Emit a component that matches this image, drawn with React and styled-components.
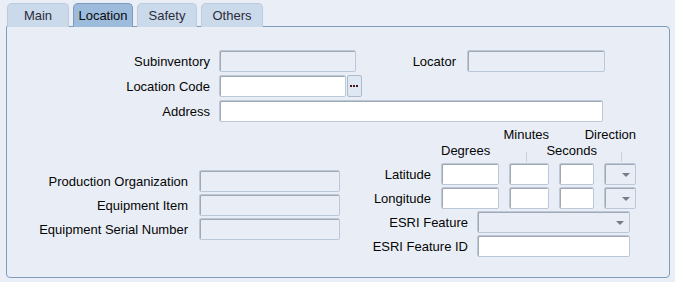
import React from "react";
import styled, { createGlobalStyle } from "styled-components";

const GlobalStyle = createGlobalStyle`
  html, body {
    margin: 0;
    padding: 0;
    background: #eaeff7;
  }
  body {
    font-family: "Liberation Sans", Arial, sans-serif;
    font-size: 13px;
    color: #050505;
  }
`;

const Page = styled.div`
  width: 675px;
  height: 282px;
  padding: 3px 0 0 6px;
  box-sizing: border-box;
`;

const TabBar = styled.div`
  display: flex;
  gap: 4px;
  padding-left: 1px;
  height: 23px;
  position: relative;
  z-index: 1;
`;

const Tab = styled.div`
  width: ${(p) => p.$w}px;
  height: 24px;
  box-sizing: border-box;
  display: flex;
  align-items: center;
  justify-content: center;
  border: 1px solid ${(p) => (p.$active ? "#7f9cbc" : "#bccbdc")};
  border-bottom: none;
  border-radius: 5px 5px 0 0;
  background: ${(p) => (p.$active ? "#9dbcdc" : "#cbdaea")};
  color: ${(p) => (p.$active ? "#0a0a0a" : "#2b2b3a")};
  padding-bottom: 1px;
`;

const Panel = styled.div`
  width: 664px;
  height: 252px;
  box-sizing: border-box;
  border: 1px solid #7f9cbc;
  border-radius: 0 4px 4px 4px;
  background: #e9eef6;
  padding-top: 23px;
`;

const TopRows = styled.div`
  display: flex;
  flex-direction: column;
  gap: 3px;
`;

const Row = styled.div`
  display: flex;
  align-items: center;
  height: 22px;
`;

const Label = styled.div`
  width: ${(p) => p.$w}px;
  margin-right: ${(p) => p.$gap ?? 9}px;
  text-align: right;
  white-space: nowrap;
  flex: none;
`;

const Field = styled.div`
  width: ${(p) => p.$w}px;
  height: 22px;
  box-sizing: border-box;
  border: 1px solid #bac8d9;
  border-radius: 2px;
  box-shadow: inset 1px 1px 0 #a3a9b1;
  background: ${(p) => (p.$disabled ? "#e9eef6" : "#ffffff")};
  flex: none;
  position: relative;
`;

const Caret = styled.span`
  position: absolute;
  right: 5px;
  top: 9px;
  width: 0;
  height: 0;
  border-left: 4px solid transparent;
  border-right: 4px solid transparent;
  border-top: 4px solid #737c87;
`;

const LovButton = styled.div`
  width: 15px;
  height: 22px;
  box-sizing: border-box;
  margin-left: 1px;
  border: 1px solid #adbccd;
  border-radius: 2px;
  background: #dfe8f2;
  display: flex;
  align-items: center;
  justify-content: center;
`;

const Bottom = styled.div`
  display: flex;
  margin-top: 5px;
`;

const LeftCol = styled.div`
  display: flex;
  flex-direction: column;
  gap: 2px;
  padding-top: 43px;
`;

const RightCol = styled.div`
  display: flex;
  flex-direction: column;
  margin-left: 20px;
`;

const CoordGrid = styled.div`
  display: grid;
  grid-template-columns: 71px 58px 40px 35px 32px;
  column-gap: 10px;
  row-gap: 2px;
  align-items: center;
`;

const HeaderGrid = styled.div`
  display: grid;
  grid-template-columns: 71px 58px 40px 35px 32px;
  grid-template-rows: 16px 20px;
  column-gap: 10px;
`;

const Head = styled.div`
  grid-column: ${(p) => p.$col};
  grid-row: ${(p) => p.$row};
  display: flex;
  justify-content: ${(p) => (p.$end ? "flex-end" : "flex-start")};
  margin-right: ${(p) => p.$mr ?? 0}px;
  white-space: nowrap;
  line-height: 15px;
`;

const Divider = styled.div`
  grid-column: ${(p) => p.$col};
  grid-row: 2;
  margin: 9px 0 0 17px;
  width: 1px;
  height: 10px;
  background: #c9d2dc;
`;

const CoordLabel = styled.div`
  text-align: right;
  white-space: nowrap;
`;

const EsriRows = styled.div`
  display: flex;
  flex-direction: column;
  gap: 2px;
  margin-top: 2px;
`;

const Dots = () => (
  <svg width="9" height="3" viewBox="0 0 9 3">
    <rect x="0" y="0" width="2" height="2" fill="#4a1515" />
    <rect x="3" y="0" width="2" height="2" fill="#4a1515" />
    <rect x="6" y="0" width="2" height="2" fill="#4a1515" />
  </svg>
);

const tabs = [
  { name: "Main", w: 62 },
  { name: "Location", w: 60, active: true },
  { name: "Safety", w: 60 },
  { name: "Others", w: 62 },
];

const coords = ["Latitude", "Longitude"];

export default function App() {
  return (
    <Page>
      <GlobalStyle />
      <TabBar>
        {tabs.map((t) => (
          <Tab key={t.name} $w={t.w} $active={t.active}>
            {t.name}
          </Tab>
        ))}
      </TabBar>
      <Panel>
        <TopRows>
          <Row>
            <Label $w={203}>Subinventory</Label>
            <Field $w={137} $disabled />
            <Label $w={100} $gap={11}>
              Locator
            </Label>
            <Field $w={138} $disabled />
          </Row>
          <Row>
            <Label $w={203}>Location Code</Label>
            <Field $w={127} />
            <LovButton>
              <Dots />
            </LovButton>
          </Row>
          <Row>
            <Label $w={203}>Address</Label>
            <Field $w={384} />
          </Row>
        </TopRows>

        <Bottom>
          <LeftCol>
            <Row>
              <Label $w={181} $gap={11}>
                Production Organization
              </Label>
              <Field $w={141} $disabled />
            </Row>
            <Row>
              <Label $w={181} $gap={11}>
                Equipment Item
              </Label>
              <Field $w={141} $disabled />
            </Row>
            <Row>
              <Label $w={181} $gap={11}>
                Equipment Serial Number
              </Label>
              <Field $w={141} $disabled />
            </Row>
          </LeftCol>

          <RightCol>
            <HeaderGrid>
              <Head $col={3} $row={1} $end>
                Minutes
              </Head>
              <Head $col={5} $row={1} $end>
                Direction
              </Head>
              <Head $col={2} $row={2}>
                Degrees
              </Head>
              <Divider $col={3} />
              <Head $col={4} $row={2} $end $mr={-3}>
                Seconds
              </Head>
              <Divider $col={5} />
            </HeaderGrid>
            <CoordGrid>
              {coords.map((c) => (
                <React.Fragment key={c}>
                  <CoordLabel>{c}</CoordLabel>
                  <Field $w={58} />
                  <Field $w={40} />
                  <Field $w={35} />
                  <Field $w={32} $disabled>
                    <Caret />
                  </Field>
                </React.Fragment>
              ))}
            </CoordGrid>
            <EsriRows>
              <Row>
                <Label $w={108}>ESRI Feature</Label>
                <Field $w={153} $disabled>
                  <Caret />
                </Field>
              </Row>
              <Row>
                <Label $w={108}>ESRI Feature ID</Label>
                <Field $w={153} />
              </Row>
            </EsriRows>
          </RightCol>
        </Bottom>
      </Panel>
    </Page>
  );
}
